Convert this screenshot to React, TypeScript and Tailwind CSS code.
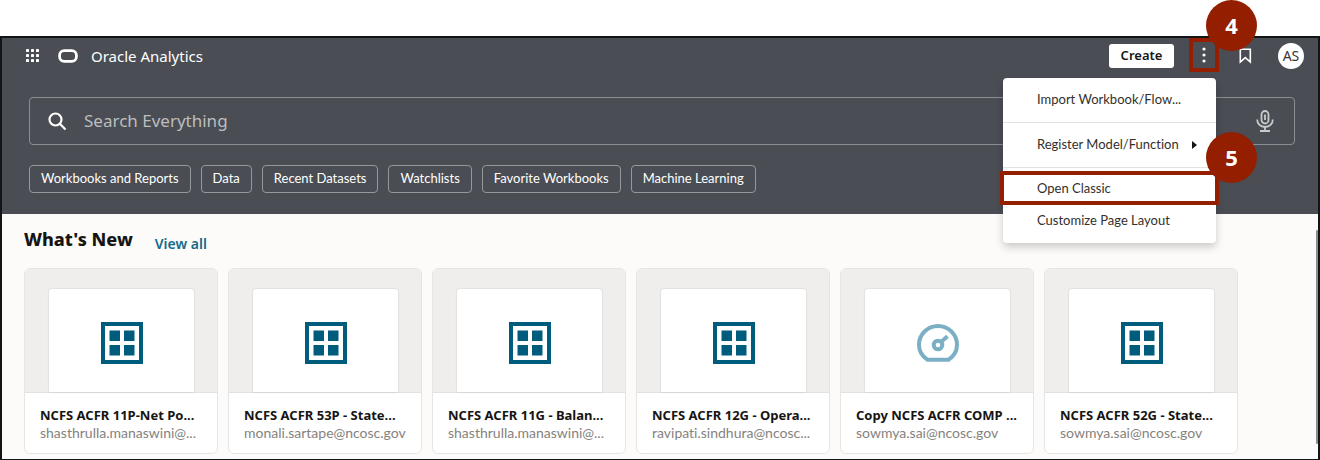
import type { ReactNode } from "react"

type CardKind = "workbook" | "dashboard"

interface CardItem {
  title: string
  owner: string
  kind: CardKind
}

const FILTERS = [
  "Workbooks and Reports",
  "Data",
  "Recent Datasets",
  "Watchlists",
  "Favorite Workbooks",
  "Machine Learning",
]

const CARDS: CardItem[] = [
  { title: "NCFS ACFR 11P-Net Po...", owner: "shasthrulla.manaswini@...", kind: "workbook" },
  { title: "NCFS ACFR 53P - State...", owner: "monali.sartape@ncosc.gov", kind: "workbook" },
  { title: "NCFS ACFR 11G - Balan...", owner: "shasthrulla.manaswini@...", kind: "workbook" },
  { title: "NCFS ACFR 12G - Opera...", owner: "ravipati.sindhura@ncosc...", kind: "workbook" },
  { title: "Copy NCFS ACFR COMP ...", owner: "sowmya.sai@ncosc.gov", kind: "dashboard" },
  { title: "NCFS ACFR 52G - State...", owner: "sowmya.sai@ncosc.gov", kind: "workbook" },
]

export default function App() {
  return (
    <div className="bg-white pt-9 font-['Noto_Sans','Open_Sans',sans-serif] text-[#161513] [font-variant-ligatures:none]">
      <div className="border-2 border-[#131416] bg-[#fcfbf9]">

        {/* ── Header ─────────────────────────────────── */}
        <header className="bg-[#4a4d54] pb-[21px] text-white">
          <div className="flex h-9 items-center pr-[14px] pl-6">
            <button type="button" aria-label="Navigator">
              <GridIcon />
            </button>
            <OracleLogo />
            <span className="ml-[13px] text-[15px]">Oracle Analytics</span>

            <button
              type="button"
              className="ml-auto h-6 w-[65px] rounded-[3px] bg-white text-[13px] font-semibold text-[#161513]"
            >
              Create
            </button>
            <PageMenu />
            <button type="button" aria-label="Bookmarks" className="ml-5">
              <BookmarkIcon />
            </button>
            <button
              type="button"
              className="ml-[26px] flex size-[26px] items-center justify-center rounded-full bg-white text-sm text-[#3a3631]"
            >
              AS
            </button>
          </div>

          <div className="mr-[23px] ml-[27px]">
            <label className="mt-[23px] flex h-12 items-center rounded-[4px] border border-[#8b8e92] pr-5 pl-[18px]">
              <SearchIcon />
              <input
                type="search"
                aria-label="Search Everything"
                placeholder="Search Everything"
                className="ml-[17px] min-w-0 flex-1 bg-transparent text-[17px] outline-none placeholder:text-[#bcbdbf]"
              />
              <MicIcon />
            </label>

            <div className="mt-5 flex gap-[10px]">
              {FILTERS.map((name) => (
                <button
                  key={name}
                  type="button"
                  className="h-7 rounded-[4px] border border-[#96989b] px-[11px] font-['Lato','Noto_Sans',sans-serif] text-[13px] whitespace-nowrap"
                >
                  {name}
                </button>
              ))}
            </div>
          </div>
        </header>

        {/* ── What's New ─────────────────────────────── */}
        <main className="flex justify-between">
          <section className="min-w-0 flex-1 overflow-hidden pt-3 pb-[5px] pl-[22px]">
            <div className="flex h-[42px] items-start">
              <h2 className="text-lg leading-[26px] font-extrabold">What's New</h2>
              <a href="#all" className="ml-[22px] pt-2 text-sm leading-5 font-semibold text-[#156a88]">
                View all
              </a>
            </div>
            <div className="flex gap-[11px]">
              {CARDS.map((card) => (
                <Card key={card.title} {...card} />
              ))}
            </div>
          </section>
          <div className="flex w-[2px] flex-col pt-4 pb-[15px]">
            <div className="flex-1 rounded-full bg-[#8d8c8b]" />
          </div>
        </main>
      </div>
    </div>
  )
}

function PageMenu() {
  return (
    <div className="relative ml-[15px] h-9 w-[30px]">
      <button
        type="button"
        aria-label="Page menu"
        className="flex h-[34px] w-[30px] items-center justify-center border-4 border-[#931f00]"
      >
        <KebabIcon />
      </button>
      <StepBadge className="-top-[38px] left-[17px]">4</StepBadge>

      <div className="absolute top-10 right-[3px] z-10 w-[213px] rounded-[4px] bg-white py-[6px] font-['Lato','Noto_Sans',sans-serif] text-[13px] text-[#33302c] shadow-[0_4px_8px_rgba(0,0,0,0.2)]">
        <MenuItem>Import Workbook/Flow...</MenuItem>
        <hr className="my-[6px] border-[#e3e2e0]" />
        <MenuItem>
          Register Model/Function
          <svg width="5" height="8" viewBox="0 0 5 8" className="ml-auto">
            <path d="M0 0L5 4L0 8Z" fill="#161513" />
          </svg>
        </MenuItem>
        <hr className="mt-[6px] mb-[5px] border-[#e3e2e0]" />
        <div className="relative">
          <MenuItem>Open Classic</MenuItem>
          <div className="pointer-events-none absolute -inset-x-[3px] -top-[2px] bottom-0 border-4 border-[#931f00]" />
          <StepBadge className="-top-[41px] -right-[41px]">5</StepBadge>
        </div>
        <MenuItem>Customize Page Layout</MenuItem>
      </div>
    </div>
  )
}

function MenuItem({ children }: { children: ReactNode }) {
  return (
    <button type="button" className="flex h-8 w-full items-center pr-[19px] pl-[34px] text-left whitespace-nowrap">
      {children}
    </button>
  )
}

function StepBadge({ className, children }: { className: string; children: ReactNode }) {
  return (
    <span
      className={`absolute z-20 flex size-[51px] items-center justify-center rounded-full bg-[#931f00] font-['Noto_Sans',sans-serif] text-[22px] font-bold text-white ${className}`}
    >
      {children}
    </span>
  )
}

function Card({ title, owner, kind }: CardItem) {
  return (
    <article className="w-[194px] shrink-0 -mr-px overflow-hidden rounded-[6px] border border-[#e6e5e3] bg-white">
      <div className="border-b border-[#e3e2e0] bg-[#efeeec] pt-5 pr-[23px] pl-6">
        <div className="flex h-[103px] items-center justify-center rounded-t-[3px] bg-white pt-1 shadow-[0_0_2px_rgba(0,0,0,0.18)]">
          {kind === "workbook" ? <WorkbookIcon /> : <GaugeIcon />}
        </div>
      </div>
      <div className="h-[60px] pt-3 pl-[15px] whitespace-nowrap">
        <h3 className="text-[13px] leading-5 font-bold">{title}</h3>
        <p className="font-['Lato','Noto_Sans',sans-serif] text-sm leading-4 text-[#85827e]">{owner}</p>
      </div>
    </article>
  )
}

/* ── Icons ─────────────────────────────────────── */

function GridIcon() {
  const steps = [0, 5, 10]
  return (
    <svg width="14" height="14" viewBox="0 0 14 14" fill="white">
      {steps.map((y) => steps.map((x) => <rect key={`${x}-${y}`} x={x} y={y} width="3" height="3" rx="0.4" />))}
    </svg>
  )
}

function OracleLogo() {
  return (
    <svg width="20" height="14" viewBox="0 0 20 14" className="ml-[18px]" fill="none" stroke="white" strokeWidth="2.8">
      <rect x="1.6" y="1.6" width="16.8" height="10.8" rx="4.6" />
    </svg>
  )
}

function KebabIcon() {
  return (
    <svg width="4" height="16" viewBox="0 0 4 16" fill="white">
      <circle cx="2" cy="2" r="1.6" />
      <circle cx="2" cy="8" r="1.6" />
      <circle cx="2" cy="14" r="1.6" />
    </svg>
  )
}

function BookmarkIcon() {
  return (
    <svg width="13" height="16" viewBox="0 0 13 16" fill="none" stroke="white" strokeWidth="1.6">
      <path d="M1.3 1.3H11.3V14L6.3 9.6L1.3 14Z" />
    </svg>
  )
}

function SearchIcon() {
  return (
    <svg width="19" height="19" viewBox="0 0 19 19" fill="none" stroke="white" strokeWidth="2.2">
      <circle cx="7.5" cy="7.5" r="6" />
      <path d="M11.8 11.8L17.5 17.5" />
    </svg>
  )
}

function MicIcon() {
  return (
    <svg width="18" height="22" viewBox="0 0 18 22" fill="none" stroke="#c9cacb" strokeWidth="1.8">
      <rect x="5.5" y="1" width="7" height="12.5" rx="3.5" />
      <path d="M9 4.5V10" />
      <path d="M1.2 9.5C1.2 14 4.5 17 9 17S16.8 14 16.8 9.5" />
      <path d="M9 17V21M4 21H14" />
    </svg>
  )
}

function WorkbookIcon() {
  return (
    <svg width="42" height="42" viewBox="0 0 42 42" fill="#005c7c">
      <path fillRule="evenodd" d="M0 0H42V42H0ZM4 4V38H38V4Z" />
      <path d="M8.5 8.5H19V19H8.5ZM23 8.5H33.5V19H23ZM8.5 23H19V33.5H8.5ZM23 23H33.5V33.5H23Z" />
    </svg>
  )
}

function GaugeIcon() {
  return (
    <svg width="42" height="42" viewBox="0 0 42 42" fill="none" stroke="#7bb0c4" strokeWidth="4">
      <path d="M10.3 37.7C5.2 34.2 2 28.8 2 22.8C2 12.3 10.5 4 21 4S40 12.3 40 22.8C40 28.8 36.8 34.2 31.7 37.7Z" />
      <circle cx="21" cy="23" r="4.3" />
      <path d="M24 20L30.5 14.2" />
    </svg>
  )
}
